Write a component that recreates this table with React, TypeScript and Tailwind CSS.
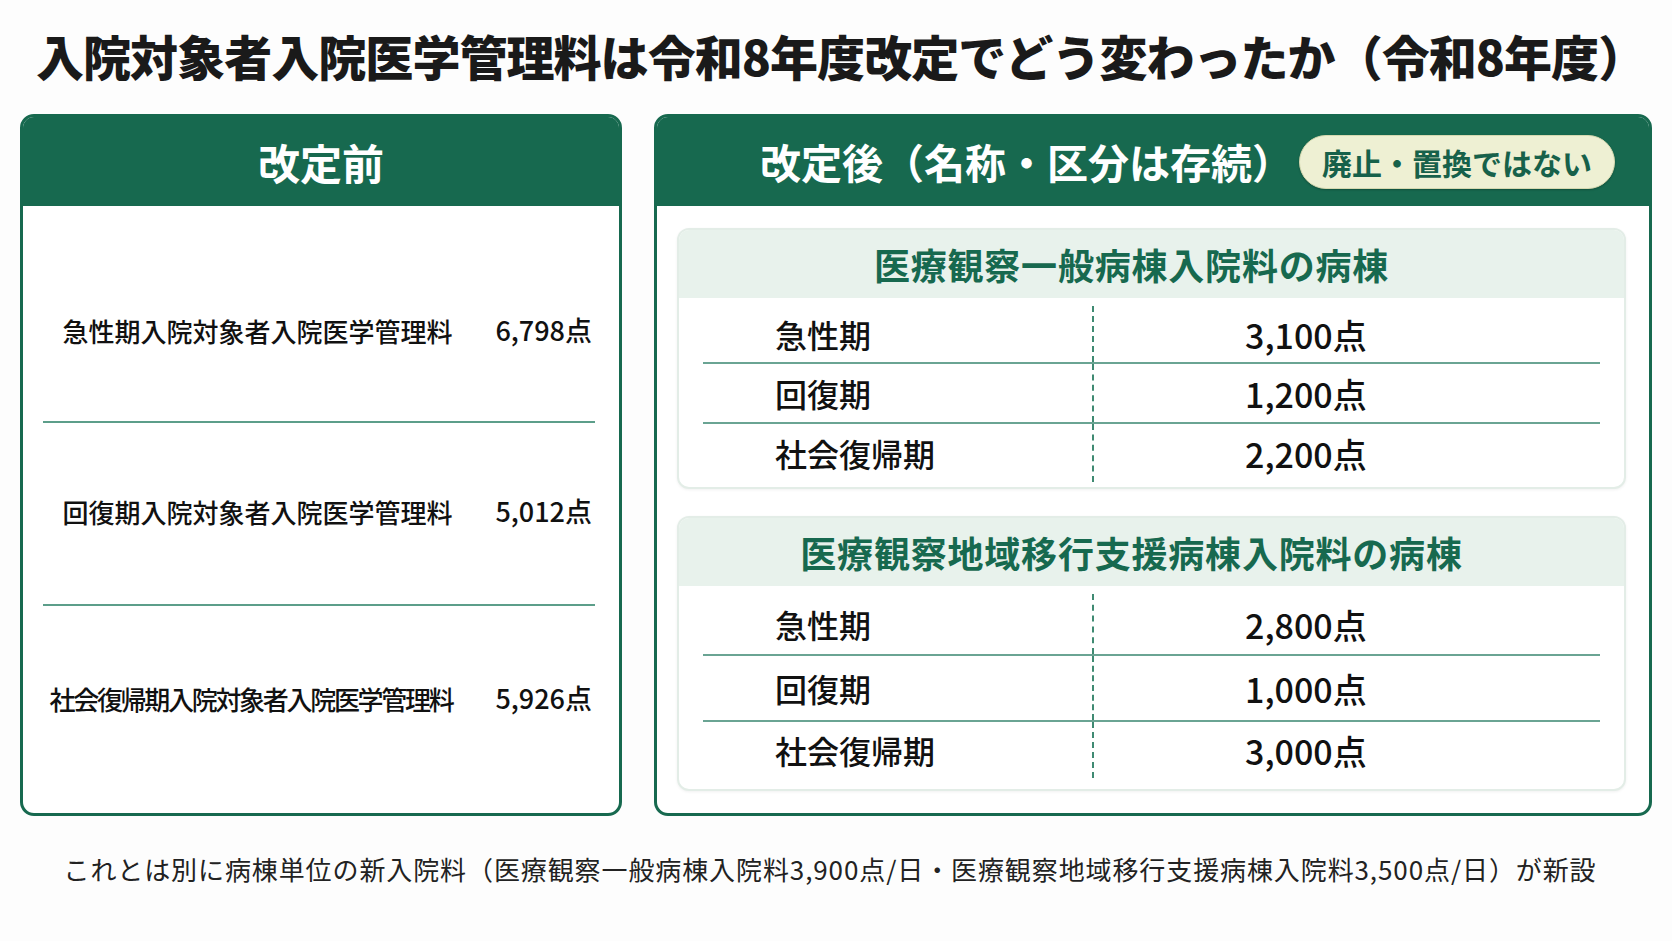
import React from "react";

type Row = { label: string; value: string };

const beforeRows = [
  { label: "急性期入院対象者入院医学管理料", value: "6,798点", h: "h-[217px] pt-[34px]", tight: false },
  { label: "回復期入院対象者入院医学管理料", value: "5,012点", h: "h-[183px] pb-[4px]", tight: false },
  { label: "社会復帰期入院対象者入院医学管理料", value: "5,926点", h: "flex-1 pb-[22px]", tight: true },
];

const wards: { title: string; rows: Row[]; heights: string[]; wrap: string }[] = [
  {
    title: "医療観察一般病棟入院料の病棟",
    rows: [
      { label: "急性期", value: "3,100点" },
      { label: "回復期", value: "1,200点" },
      { label: "社会復帰期", value: "2,200点" },
    ],
    heights: ["h-[58px]", "h-[60px]", "h-[58px]"],
    wrap: "pt-[8px] pb-[5px]",
  },
  {
    title: "医療観察地域移行支援病棟入院料の病棟",
    rows: [
      { label: "急性期", value: "2,800点" },
      { label: "回復期", value: "1,000点" },
      { label: "社会復帰期", value: "3,000点" },
    ],
    heights: ["h-[62px]", "h-[66px]", "h-[56px]"],
    wrap: "pt-[8px] pb-[11px]",
  },
];

function WardCard({ ward }: { ward: (typeof wards)[number] }) {
  return (
    <div className="rounded-[12px] border-2 border-[#e3ede7] bg-white shadow-[0_1px_3px_rgba(0,0,0,0.06)] overflow-hidden">
      {/* card header */}
      <div className="h-[68px] bg-[#e8f2ec] flex items-center justify-center pr-[40px]">
        <span className="text-[36px] font-bold text-[#17694f] tracking-[0.8px] leading-none">{ward.title}</span>
      </div>
      <div className={`mx-[24px] ${ward.wrap}`}>
        {ward.rows.map((r, i) => (
          <div
            key={r.label}
            className={`grid grid-cols-[391px_1fr] ${ward.heights[i]} ${
              i < ward.rows.length - 1 ? "border-b-2 border-[#6aa493]" : ""
            }`}
          >
            <div className="flex items-center pl-[72px] border-r-2 border-dashed border-[#3f8a72] text-[32px] font-medium text-[#111]">
              {r.label}
            </div>
            <div className="flex items-center pl-[151px] text-[34px] font-medium text-[#111]">{r.value}</div>
          </div>
        ))}
      </div>
    </div>
  );
}

export default function App() {
  return (
    <div className="w-[1672px] h-[941px] bg-[#fdfdfd] font-['Noto_Sans_CJK_JP','Noto_Sans',sans-serif] text-[#1a1a1a] overflow-hidden">
      {/* Title */}
      <div className="h-[114px] pl-[36px] pb-[4px] flex items-center">
        <h1 className="text-[48px] font-black tracking-[-0.95px] leading-none whitespace-nowrap">
          入院対象者入院医学管理料は令和8年度改定でどう変わったか（令和8年度）
        </h1>
      </div>

      {/* Panels */}
      <div className="flex gap-[32px] pl-[20px] h-[702px]">
        {/* Before */}
        <div className="w-[602px] rounded-[14px] border-[3px] border-[#17694f] bg-white overflow-hidden flex flex-col">
          <div className="h-[89px] shrink-0 bg-[#17694f] flex items-center justify-center">
            <span className="text-[42px] font-bold text-white leading-none">改定前</span>
          </div>
          <div className="flex-1 flex flex-col">
            {beforeRows.map((r, i) => (
              <div
                key={r.label}
                className={`${r.h} ml-[20px] mr-[24px] flex items-center justify-end pr-[3px] gap-[43px] ${
                  i < beforeRows.length - 1 ? "border-b-2 border-[#5c9e8a]" : ""
                }`}
              >
                <span className={`text-[26px] font-medium text-[#111] ${r.tight ? "tracking-[-2.3px]" : ""}`}>
                  {r.label}
                </span>
                <span className="text-[27px] font-medium text-[#111]">{r.value}</span>
              </div>
            ))}
          </div>
        </div>

        {/* After */}
        <div className="w-[998px] rounded-[14px] border-[3px] border-[#17694f] bg-white overflow-hidden flex flex-col">
          <div className="h-[89px] shrink-0 bg-[#17694f] flex items-center pl-[103px] gap-[6px]">
            <span className="text-[41px] font-bold text-white leading-none whitespace-nowrap">
              改定後（名称・区分は存続）
            </span>
            <span className="h-[54px] px-[22px] rounded-full bg-[#eef0d3] border border-[#d5d9b0] shadow-[0_1px_2px_rgba(0,0,0,0.25)] flex items-center text-[30px] font-bold text-[#17614a] leading-none whitespace-nowrap">
              廃止・置換ではない
            </span>
          </div>
          <div className="flex-1 flex flex-col gap-[27px] pt-[22px] pl-[20px] pr-[23px]">
            {wards.map((w) => (
              <WardCard key={w.title} ward={w} />
            ))}
          </div>
        </div>
      </div>

      {/* Footnote */}
      <p className="mt-[36px] text-center text-[26px] leading-[34px] tracking-[0.9px] text-[#222] pr-[12px]">
        これとは別に病棟単位の新入院料（医療観察一般病棟入院料3,900点/日・医療観察地域移行支援病棟入院料3,500点/日）が新設
      </p>
    </div>
  );
}
